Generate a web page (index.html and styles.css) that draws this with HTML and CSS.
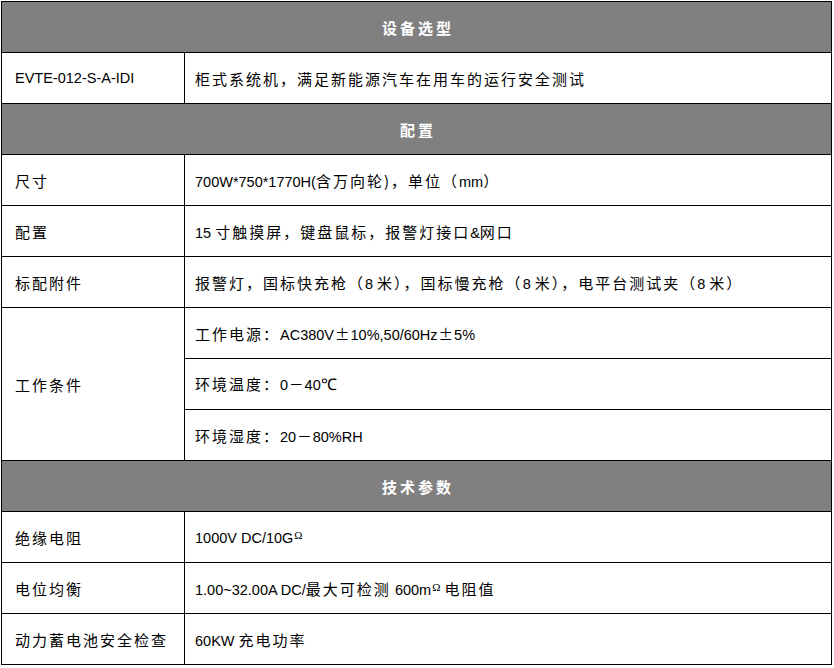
FILE: index.html
```html
<!DOCTYPE html>
<html lang="zh">
<head>
<meta charset="utf-8">
<title>设备选型</title>
<link rel="stylesheet" href="styles.css">
</head>
<body>
<div class="wrap">
<table class="spec">
  <colgroup><col class="c1"><col class="c2"></colgroup>
  <tr class="head"><td colspan="2"><span class="zh">设备选型</span></td></tr>
  <tr><td>EVTE-012-S-A-IDI</td><td><span class="zh">柜式系统机，满足新能源汽车在用车的运行安全测试</span></td></tr>
  <tr class="head"><td colspan="2"><span class="zh">配置</span></td></tr>
  <tr><td><span class="zh">尺寸</span></td><td>700W*750*1770H(<span class="zh">含万向轮)，单位（</span>mm<span class="zh">）</span></td></tr>
  <tr><td><span class="zh">配置</span></td><td>15 <span class="zh">寸触摸屏，键盘鼠标，报警灯接口</span>&amp;<span class="zh">网口</span></td></tr>
  <tr><td><span class="zh">标配附件</span></td><td><span class="zh">报警灯，国标快充枪（</span>8 <span class="zh">米），国标慢充枪（</span>8 <span class="zh">米），电平台测试夹（</span>8 <span class="zh">米）</span></td></tr>
  <tr><td rowspan="3"><span class="zh">工作条件</span></td><td><span class="zh">工作电源：</span>AC380V<span class="sym">±</span>10%,50/60Hz<span class="sym">±</span>5%</td></tr>
  <tr><td class="val"><span class="zh">环境温度：</span>0<span class="sym">－</span>40<span class="deg">℃</span></td></tr>
  <tr><td class="val"><span class="zh">环境湿度：</span>20<span class="sym">－</span>80%RH</td></tr>
  <tr class="head"><td colspan="2"><span class="zh">技术参数</span></td></tr>
  <tr><td><span class="zh">绝缘电阻</span></td><td>1000V DC/10G<span class="ohm">Ω</span></td></tr>
  <tr><td><span class="zh">电位均衡</span></td><td>1.00~32.00A DC/<span class="zh">最大可检测</span> 600m<span class="ohm">Ω</span> <span class="zh">电阻值</span></td></tr>
  <tr><td><span class="zh">动力蓄电池安全检查</span></td><td>60KW <span class="zh">充电功率</span></td></tr>
</table>
</div>
</body>
</html>
```
FILE: styles.css
```css
html, body {
  margin: 0;
  padding: 0;
  background: #fff;
}
.wrap {
  padding: 1px 0 0 1px;
}
.spec {
  border-collapse: collapse;
  width: 830px;
  table-layout: fixed;
  font-family: "Liberation Sans", "Noto Sans CJK SC", sans-serif;
  font-size: 14.5px;
  color: #000;
}
.c1 { width: 183px; }
.c2 { width: 647px; }
.spec td {
  border: 1px solid #000;
  height: 50px;
  padding: 0 0 0 13px;
  vertical-align: middle;
  white-space: nowrap;
}
.spec td + td,
.spec td.val {
  padding-left: 10px;
}
.zh {
  font-family: "Noto Sans CJK SC", sans-serif;
  font-size: 15px;
  letter-spacing: 2px;
}
.sym {
  font-family: "Noto Sans CJK SC", sans-serif;
  margin: 0 1px;
}
.deg {
  font-family: "Liberation Serif", serif;
  font-size: 16px;
}
.ohm {
  font-family: "Liberation Serif", serif;
  font-size: 11px;
  vertical-align: 4px;
  margin-left: 1px;
}
.head td {
  background: #808080;
  color: #fff;
  font-weight: bold;
  font-size: 15px;
  text-align: center;
  padding: 0;
}
.head .zh {
  letter-spacing: 3px;
  margin-right: -3px;
}
```
